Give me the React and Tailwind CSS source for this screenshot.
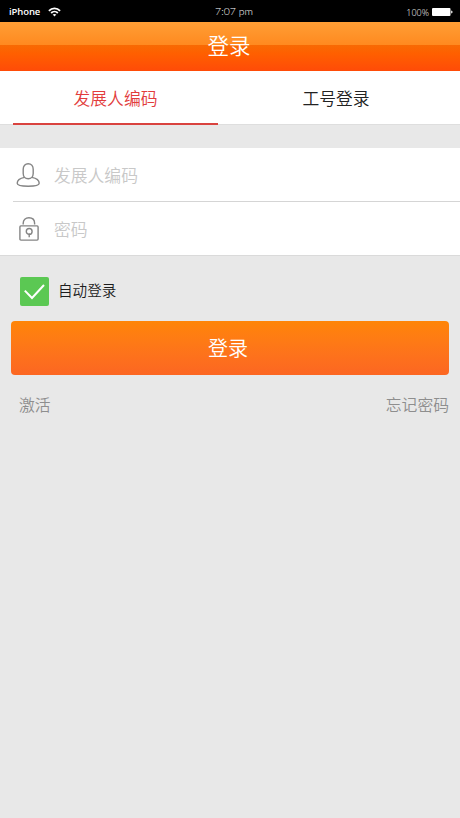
import React, { useState } from 'react';

const StatusBar = () => (
  <div className="h-[22px] shrink-0 bg-black text-white grid grid-cols-3 items-center pl-[9px] pr-[7px]">
    <div className="flex items-center gap-[8px] pt-px">
      <span className="font-['Open_Sans',sans-serif] text-[9.5px] leading-none font-semibold tracking-[-0.1px]">iPhone</span>
      <svg width="13" height="10" viewBox="0 0 14 10" fill="none" stroke="currentColor" strokeWidth="2">
        <path d="M1 3.7C4.3.3 9.7.3 13 3.7" />
        <path d="M3.4 6.1c2-2 5.2-2 7.2 0" />
        <path d="M7 9.9 5 7.8c1-1 3-1 4 0z" fill="currentColor" stroke="none" />
      </svg>
    </div>
    <div className="text-center font-[Lato,sans-serif] text-[10.5px] leading-none pl-[6px]">7:07 pm</div>
    <div className="flex items-center justify-end gap-[3px] pt-[2px]">
      <span className="font-['Open_Sans',sans-serif] text-[9px] leading-none">100%</span>
      <svg width="21" height="8" viewBox="0 0 21 8" fill="currentColor">
        <rect width="18.5" height="8" rx="1" />
        <path d="M19.2 2.5c1.8.2 1.8 2.8 0 3z" />
      </svg>
    </div>
  </div>
);

const UserIcon = () => (
  <svg width="24" height="24" viewBox="0 0 24 24" fill="none" stroke="#858585" strokeWidth="1.4">
    <path d="M12.200.8c3 0 5 2.300 5 5.400v4.300c0 3-2 5.200-5 5.200s-5-2.200-5-5.200V6.200c0-3.100 2-5.400 5-5.400z" />
    <path d="M8.600 14.400C4.200 15.200 1.200 17.500 1.200 20.300c0 2.100 3.800 2.900 11 2.900s11-.8 11-2.900c0-2.800-3-5.100-7.400-5.900" />
  </svg>
);

const LockIcon = () => (
  <svg width="20" height="24" viewBox="0 0 20 24" fill="none" stroke="#858585" strokeWidth="1.4">
    <rect x=".9" y="8.900" width="18.200" height="14.200" rx="1" />
    <path d="M4.200 7.400V6.200C4.200 2.900 6.500.8 9.900.8s5.700 2.100 5.700 5.400v1.200" />
    <circle cx="10.200" cy="14.400" r="2.900" />
    <path d="M10.200 16.500v3.800" />
  </svg>
);

const tabs = ['发展人编码', '工号登录'];

const App = () => {
  const [activeTab, setActiveTab] = useState(0);
  const [account, setAccount] = useState('');
  const [password, setPassword] = useState('');
  const [autoLogin, setAutoLogin] = useState(true);

  return (
    <div className="min-h-screen bg-[#e8e8e8] flex flex-col overflow-hidden font-['Noto_Sans_CJK_SC',sans-serif] font-[350]">
      <StatusBar />

      {/* Header */}
      <header className="h-[49px] shrink-0 flex items-center justify-center bg-[linear-gradient(to_bottom,#ff9e35_0%,#ff8a20_46%,#f86a03_47%,#ff5f00_65%,#ff4b08_100%)]">
        <h1 className="text-white text-[21.5px] leading-none font-[350] pb-[3px] pr-[2px]">登录</h1>
      </header>

      {/* Tabs */}
      <div className="h-[54px] shrink-0 bg-white flex pl-[13px] border-b border-[#dedede]">
        {tabs.map((tab, i) => (
          <button
            key={tab}
            onClick={() => setActiveTab(i)}
            className={`h-[54px] pt-[3px] text-[16.8px] leading-none border-b-2 ${i === 0 ? 'w-[205px]' : 'flex-1 pr-[6px]'} ${activeTab === i ? 'text-[#e23c3c] border-[#d9433f]' : 'text-[#222] border-transparent'}`}
          >
            {tab}
          </button>
        ))}
      </div>

      {/* Fields */}
      <div className="mt-[23px] h-[108px] shrink-0 bg-white border-b border-[#dadada] flex flex-col">
        <div className="ml-[13px] h-[54px] border-b border-[#d5d5d5] flex items-center pl-[3px]">
          <UserIcon />
          <input
            type="text"
            value={account}
            onChange={(e) => setAccount(e.target.value)}
            placeholder="发展人编码"
            className="ml-[14px] pt-[2px] flex-1 min-w-0 text-[16.8px] text-[#222] placeholder:text-[#c8c8c8] outline-none"
          />
        </div>
        <div className="ml-[13px] flex-1 flex items-center pl-[6px]">
          <LockIcon />
          <input
            type="password"
            value={password}
            onChange={(e) => setPassword(e.target.value)}
            placeholder="密码"
            className="ml-[15px] pt-[2px] flex-1 min-w-0 text-[16.8px] text-[#222] placeholder:text-[#c8c8c8] outline-none"
          />
        </div>
      </div>

      {/* Auto login */}
      <button
        onClick={() => setAutoLogin(!autoLogin)}
        className="mt-[21px] ml-5 h-[29px] self-start flex items-center gap-[9px] text-[14.6px] leading-none text-[#1c1c1c]"
      >
        <span className="w-[29px] h-[29px] rounded-[2px] bg-[#5bc853] flex items-center justify-center">
          {autoLogin && (
            <svg width="21" height="16" viewBox="0 0 21 16" fill="none" stroke="white" strokeWidth="2">
              <path d="M.8 6.600 8 14 20 1" />
            </svg>
          )}
        </span>
        <span className="pb-[3px]">自动登录</span>
      </button>

      <button className="mt-[15px] ml-[11px] mr-[11px] h-[54px] shrink-0 rounded-[4px] bg-linear-to-b from-[#ff8506] to-[#fc6622] text-white text-[20px] leading-none pr-[4px]">
        登录
      </button>

      <div className="mt-[20px] ml-[19px] mr-[11px] flex justify-between text-[15.8px] leading-5 text-[#8e8e8e]">
        <button>激活</button>
        <button>忘记密码</button>
      </div>
    </div>
  );
};

export default App;
